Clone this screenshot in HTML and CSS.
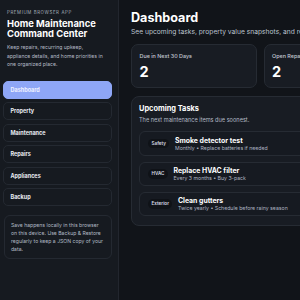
FILE: index.html
```html
<!DOCTYPE html>
<html lang="en">
<head>
    <meta charset="UTF-8">
    <meta name="viewport" content="width=device-width, initial-scale=1.0">
    <title>Home Maintenance Command Center</title>
    <link rel="stylesheet" href="styles.css">
</head>
<body>
    <aside class="sidebar">
        <div class="brand">
            <div class="eyebrow">Premium Browser App</div>
            <h1>Home Maintenance Command Center</h1>
            <p>Keep repairs, recurring upkeep, appliance details, and home priorities in one organized place.</p>
        </div>

        <nav class="nav">
            <button class="nav-item active">Dashboard</button>
            <button class="nav-item">Property</button>
            <button class="nav-item">Maintenance</button>
            <button class="nav-item">Repairs</button>
            <button class="nav-item">Appliances</button>
            <button class="nav-item">Backup</button>
        </nav>

        <div class="note">
            Save happens locally in this browser on this device. Use Backup &amp; Restore regularly to keep a JSON copy of your data.
        </div>
    </aside>

    <main class="main">
        <h2>Dashboard</h2>
        <p class="lead">See upcoming tasks, property value snapshots, and recent repair activity at a glance.</p>

        <div class="stats">
            <div class="stat">
                <div class="stat-label">Due in Next 30 Days</div>
                <div class="stat-value">2</div>
            </div>
            <div class="stat">
                <div class="stat-label">Open Repairs</div>
                <div class="stat-value">2</div>
            </div>
            <div class="stat">
                <div class="stat-label">Appliances</div>
                <div class="stat-value">4</div>
            </div>
        </div>

        <section class="panel">
            <h3>Upcoming Tasks</h3>
            <p class="panel-sub">The next maintenance items due soonest.</p>

            <div class="tasks">
                <div class="task">
                    <span class="tag">Safety</span>
                    <div>
                        <div class="task-title">Smoke detector test</div>
                        <div class="task-meta">Monthly • Replace batteries if needed</div>
                    </div>
                </div>
                <div class="task">
                    <span class="tag">HVAC</span>
                    <div>
                        <div class="task-title">Replace HVAC filter</div>
                        <div class="task-meta">Every 3 months • Buy 3-pack</div>
                    </div>
                </div>
                <div class="task">
                    <span class="tag">Exterior</span>
                    <div>
                        <div class="task-title">Clean gutters</div>
                        <div class="task-meta">Twice yearly • Schedule before rainy season</div>
                    </div>
                </div>
            </div>
        </section>
    </main>
</body>
</html>
```

FILE: styles.css
```css
* {
    box-sizing: border-box;
}

body {
    font-family: Inter, 'Liberation Sans', Arial, sans-serif;
    background: #111419;
    color: #eef1f5;
    margin: 0;
    width: 300px;
    height: 300px;
    overflow: hidden;
    display: flex;
}

.sidebar {
    flex: 0 0 119px;
    height: 300px;
    background: #161a20;
    border-right: 1px solid #22262e;
    padding: 9px 6px 0 3px;
}

.brand {
    padding: 0 6px 0 4px;
}

.eyebrow {
    font-size: 4.4px;
    line-height: 7px;
    letter-spacing: 0.6px;
    text-transform: uppercase;
    color: #a3abb8;
}

.brand h1 {
    margin: 2.8px 0 0;
    font-size: 9.4px;
    line-height: 10.5px;
    font-weight: 700;
    color: #ffffff;
}

.brand p {
    margin: 3.5px 0 0;
    font-size: 5.1px;
    line-height: 8.5px;
    color: #b6bdc9;
}

.nav {
    display: flex;
    flex-direction: column;
    gap: 3.4px;
    margin-top: 12.3px;
}

.nav-item {
    height: 18px;
    padding: 0 6.5px;
    text-align: left;
    font-family: inherit;
    font-size: 5.5px;
    font-weight: 700;
    color: #e9ecf2;
    background: #161a20;
    border: 1px solid #242931;
    border-radius: 5px;
}

.nav-item.active {
    background: #8ea6f6;
    border-color: #8ea6f6;
    color: #eef1ff;
}

.note {
    margin: 8.5px 0 0 1px;
    padding: 5px 8px 5px 6px;
    font-size: 5.1px;
    line-height: 8px;
    color: #b3bac6;
    border: 1px solid #242931;
    border-radius: 6px;
}

.main {
    flex: 0 0 auto;
    width: 420px;
    padding: 10px 12px;
}

.main h2 {
    margin: 0;
    font-size: 12.6px;
    line-height: 16px;
    font-weight: 700;
    color: #ffffff;
}

.lead {
    margin: 2px 0 0;
    font-size: 6.7px;
    line-height: 9px;
    white-space: nowrap;
    color: #bcc3ce;
}

.stats {
    display: grid;
    grid-template-columns: repeat(3, 125.5px);
    gap: 7px;
    margin-top: 7px;
}

.stat {
    height: 43.5px;
    padding: 8px 7.5px 0;
    background: #181c23;
    border: 1px solid #262b33;
    border-radius: 7px;
}

.stat-label {
    font-size: 5.4px;
    line-height: 7px;
    font-weight: 500;
    color: #c4cad4;
}

.stat-value {
    margin-top: 3.7px;
    font-size: 14.5px;
    line-height: 15px;
    font-weight: 700;
    color: #ffffff;
}

.panel {
    margin-top: 8.5px;
    padding: 7.3px 7px 8.6px;
    background: #181c23;
    border: 1px solid #262b33;
    border-radius: 8px;
}

.panel h3 {
    margin: 0;
    font-size: 7.4px;
    line-height: 10px;
    font-weight: 700;
    color: #ffffff;
}

.panel-sub {
    margin: 2px 0 0;
    font-size: 5.6px;
    line-height: 8px;
    color: #b3bac6;
}

.tasks {
    display: flex;
    flex-direction: column;
    gap: 5.8px;
    margin-top: 7px;
}

.task {
    display: flex;
    align-items: center;
    gap: 5.5px;
    height: 24.5px;
    padding: 0 8px;
    background: #161a21;
    border: 1px solid #262b33;
    border-radius: 6px;
}

.tag {
    padding: 2px 3.5px;
    font-size: 4.6px;
    line-height: 5.5px;
    font-weight: 600;
    color: #d9dde5;
    background: #0f1217;
    border-radius: 5px;
}

.task-title {
    font-size: 6.9px;
    line-height: 9px;
    font-weight: 700;
    color: #ffffff;
}

.task-meta {
    font-size: 5.2px;
    line-height: 7px;
    color: #aeb5c1;
}
```
